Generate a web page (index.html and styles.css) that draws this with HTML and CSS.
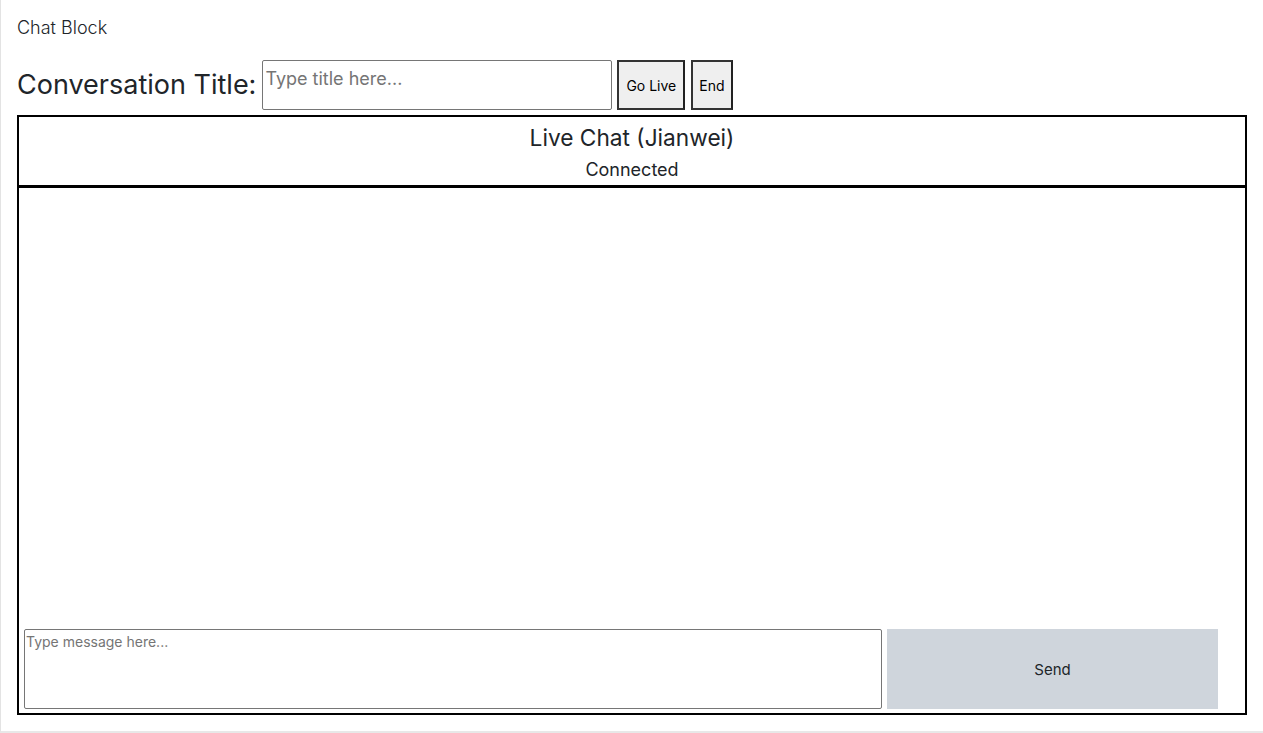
FILE: index.html
```html
<!DOCTYPE html>
<html>
<head>
<meta charset="utf-8">
<link rel="stylesheet" href="styles.css">
</head>
<body>
<div class="card">
  <div class="card-title">Chat Block</div>
  <div class="title-row">
    <label class="title-label">Conversation Title:</label>
    <textarea class="title-input" placeholder="Type title here..."></textarea>
    <button class="btn">Go Live</button>
    <button class="btn btn-end">End</button>
  </div>
  <div class="chat">
    <div class="chat-header">
      <div class="chat-name">Live Chat (Jianwei)</div>
      <div class="chat-status">Connected</div>
    </div>
    <div class="chat-messages"></div>
    <div class="chat-input-row">
      <textarea class="msg-input" placeholder="Type message here..."></textarea>
      <button class="send-btn">Send</button>
    </div>
  </div>
</div>
</body>
</html>
```
FILE: styles.css
```css
html, body {
  margin: 0;
  padding: 0;
  background: #fff;
}
body {
  font-family: Inter, "Noto Sans", sans-serif;
  color: #212529;
}
.card {
  border-left: 1px solid #e3e3e3;
  border-bottom: 2px solid #e8e8e8;
  padding: 14px 16px 16px 16px;
}
.card-title {
  font-size: 18px;
  font-weight: 300;
  line-height: 27px;
}
.title-row {
  display: flex;
  align-items: flex-start;
  margin-top: 19px;
  height: 50px;
  margin-bottom: 5px;
}
.title-label {
  font-size: 27px;
  font-weight: 400;
  line-height: 50px;
  margin-right: 6px;
}
.title-input {
  width: 350px;
  height: 50px;
  box-sizing: border-box;
  border: 1px solid #767676;
  border-radius: 2px;
  font-family: Inter, "Noto Sans", sans-serif;
  font-size: 18px;
  padding: 7px 2px 2px 2px;
  resize: none;
  margin: 0 5px 0 0;
}
.title-input::placeholder { color: #757575; }
.btn {
  height: 50px;
  box-sizing: border-box;
  background: #efefef;
  border: 2px solid #333;
  border-right-color: #222;
  font-family: Inter, "Noto Sans", sans-serif;
  font-size: 14px;
  color: #000;
  padding: 0 7px 0 7px;
  margin-right: 6px;
}
.btn-end {
  padding: 0 6px;
}
.chat {
  width: 1230px;
  height: 600px;
  box-sizing: border-box;
  border: 2px solid #000;
  display: flex;
  flex-direction: column;
}
.chat-header {
  border-bottom: 3px solid #000;
  text-align: center;
  height: 71px;
  box-sizing: border-box;
  padding-top: 5px;
}
.chat-name {
  font-size: 22.7px;
  line-height: 32px;
}
.chat-status {
  font-size: 18px;
  line-height: 28px;
  margin-top: 2px;
}
.chat-messages {
  flex: 1;
}
.chat-input-row {
  display: flex;
  gap: 5px;
  padding: 0 5px 4px 5px;
}
.msg-input {
  width: 858px;
  height: 80px;
  box-sizing: border-box;
  border: 1px solid #767676;
  border-radius: 2px;
  font-family: Inter, "Noto Sans", sans-serif;
  font-size: 14px;
  padding: 3px 1px;
  resize: none;
  margin: 0;
}
.msg-input::placeholder { color: #757575; }
.send-btn {
  width: 331px;
  height: 80px;
  border: none;
  background: #cfd5dc;
  font-family: Inter, "Noto Sans", sans-serif;
  font-size: 15px;
  color: #212529;
  padding-top: 2px;
}
```
